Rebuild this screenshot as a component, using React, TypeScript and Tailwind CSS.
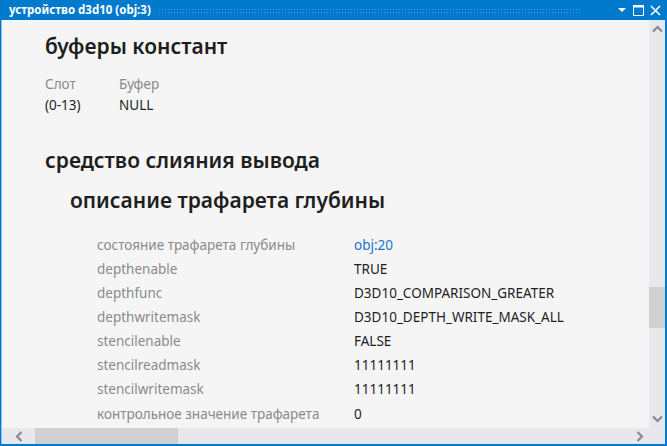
import React from "react";

const rows: [string, string, boolean?][] = [
  ["состояние трафарета глубины", "obj:20", true],
  ["depthenable", "TRUE"],
  ["depthfunc", "D3D10_COMPARISON_GREATER"],
  ["depthwritemask", "D3D10_DEPTH_WRITE_MASK_ALL"],
  ["stencilenable", "FALSE"],
  ["stencilreadmask", "11111111"],
  ["stencilwritemask", "11111111"],
  ["контрольное значение трафарета", "0"],
];

export default function App() {
  return (
    <div
      className="w-[667px] h-[446px] flex flex-col bg-[#007acc] overflow-hidden"
      style={{ fontFamily: '"Noto Sans", "Open Sans", sans-serif' }}
    >
      {/* title bar */}
      <div className="h-[20px] flex items-center shrink-0 pl-[9px] pr-[6px]">
        <span className="text-white text-[11.5px] font-bold leading-none whitespace-nowrap">
          устройство d3d10 (obj:3)
        </span>
        <div className="flex-1 h-[5px] ml-[7px] mr-[36px] bg-[radial-gradient(#4d9fdc_0.8px,transparent_1px)] bg-[length:3px_3px]" />
        <div className="flex items-center gap-[6px]">
          <svg width="10" height="10" viewBox="0 0 10 10">
            <path d="M1 3 L9 3 L5 7 Z" fill="white" />
          </svg>
          <svg width="11" height="11" viewBox="0 0 11 11">
            <rect x="0.5" y="0.5" width="10" height="10" fill="none" stroke="white" strokeWidth="1" />
            <rect x="0" y="0" width="11" height="2.5" fill="white" />
          </svg>
          <svg width="11" height="11" viewBox="0 0 11 11">
            <path d="M1 1 L10 10 M10 1 L1 10" stroke="white" strokeWidth="1.6" />
          </svg>
        </div>
      </div>
      {/* body */}
      <div className="flex-1 flex flex-col ml-[1px] mr-[2px] mb-[2px] bg-[#f5f5f5] border-l border-[#8cc0e8] min-h-0">
        <div className="flex-1 flex min-h-0">
          <div className="flex-1 overflow-hidden pl-[43px] pt-[13px]">
            <div className="text-[21px] font-semibold text-[#1e1e1e] leading-[27px]">буферы констант</div>
            <div className="mt-[14px] flex text-[13.5px] leading-[21px]">
              <div className="w-[74px]">
                <div className="text-[#8a8a8a]">Слот</div>
                <div className="text-[#1e1e1e]">(0-13)</div>
              </div>
              <div>
                <div className="text-[#8a8a8a]">Буфер</div>
                <div className="text-[#1e1e1e]">NULL</div>
              </div>
            </div>
            <div className="mt-[31px] text-[21px] font-semibold text-[#1e1e1e] leading-[27px]">
              средство слияния вывода
            </div>
            <div className="mt-[13px] ml-[25px] text-[21px] font-semibold text-[#1e1e1e] leading-[27px]">
              описание трафарета глубины
            </div>
            <div className="mt-[19px] ml-[52px] flex flex-col">
              {rows.map(([k, v, link]) => (
                <div key={k} className="flex h-[24.1px] items-center text-[13.5px] whitespace-nowrap">
                  <div className="w-[257px] text-[#8a8a8a]">{k}</div>
                  <div className={link ? "text-[#1a73d0]" : "text-[#1e1e1e]"}>{v}</div>
                </div>
              ))}
            </div>
          </div>
          {/* vertical scrollbar */}
          <div className="w-[16px] bg-[#e8e8ec] flex flex-col shrink-0">
            <div className="h-[18px] flex items-center justify-center">
              <svg width="11" height="8" viewBox="0 0 11 8">
                <path d="M1 6.5 L5.5 2 L10 6.5" stroke="#868999" strokeWidth="2.2" fill="none" />
              </svg>
            </div>
            <div className="flex-1 flex flex-col">
              <div className="h-[249px]" />
              <div className="h-[41px] mx-0 bg-[#d0d0d1]" />
              <div className="flex-1" />
            </div>
            <div className="h-[18px] flex items-center justify-center">
              <svg width="11" height="8" viewBox="0 0 11 8">
                <path d="M1 1.5 L5.5 6 L10 1.5" stroke="#868999" strokeWidth="2.2" fill="none" />
              </svg>
            </div>
          </div>
        </div>
        {/* horizontal scrollbar */}
        <div className="h-[16px] flex shrink-0">
          <div className="flex-1 bg-[#e8e8ec] flex items-center">
            <div className="w-[33px] flex items-center justify-center">
              <svg width="8" height="11" viewBox="0 0 8 11">
                <path d="M6.5 1 L2 5.5 L6.5 10" stroke="#868999" strokeWidth="2.2" fill="none" />
              </svg>
            </div>
            <div className="w-[143px] h-full bg-[#d0d0d1]" />
            <div className="flex-1" />
            <div className="w-[18px] flex items-center justify-center">
              <svg width="8" height="11" viewBox="0 0 8 11">
                <path d="M1.5 1 L6 5.5 L1.5 10" stroke="#868999" strokeWidth="2.2" fill="none" />
              </svg>
            </div>
          </div>
          <div className="w-[16px] bg-[#e8e8ec]" />
        </div>
      </div>
    </div>
  );
}
